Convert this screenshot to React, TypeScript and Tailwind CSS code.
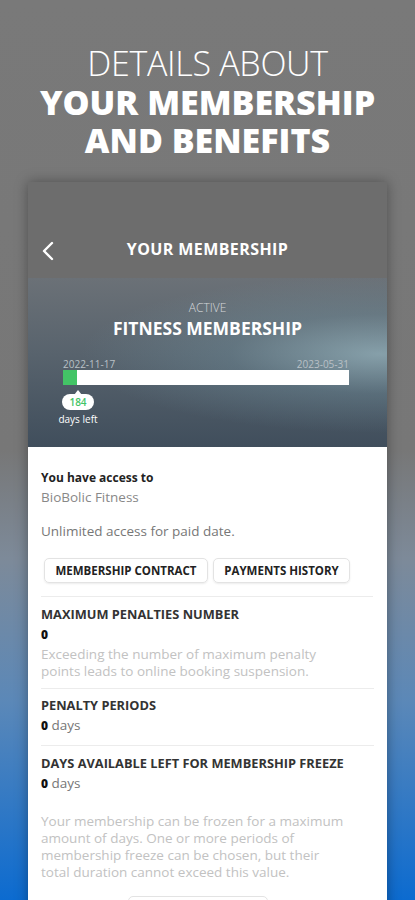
import React from "react";

const font = { fontFamily: "'Open Sans', 'Noto Sans', sans-serif" };

function Divider() {
  return <div className="h-px bg-[#ececec]" />;
}

export default function App() {
  return (
    <div
      style={font}
      className="relative w-[415px] h-[900px] overflow-hidden bg-[linear-gradient(180deg,#797979_0%,#777777_50%,#7d8a99_62%,#5b88b8_78%,#0c6bd0_100%)]"
    >
      {/* headline */}
      <div className="pt-[44px] text-center text-white leading-[39px] text-[34px]">
        <div className="font-light tracking-[-0.3px]">DETAILS ABOUT</div>
        <div className="font-extrabold">YOUR MEMBERSHIP</div>
        <div className="font-extrabold -mt-[1px]">AND BENEFITS</div>
      </div>

      {/* phone card */}
      <div className="absolute left-[28px] top-[182px] w-[359px] h-[740px] shadow-[0_0_12px_rgba(0,0,0,0.35)] bg-white">
        {/* header */}
        <div className="h-[96px] bg-[#6d6d6d] flex items-end pb-[17px] relative">
          <svg
            className="absolute left-[14px] top-[59px]"
            width="12"
            height="20"
            viewBox="0 0 12 20"
            fill="none"
          >
            <path d="M10 2 L2 10 L10 18" stroke="white" strokeWidth="2.4" strokeLinecap="round" strokeLinejoin="round" />
          </svg>
          <div className="w-full text-center text-white font-bold text-[16px] tracking-[0.4px]">
            YOUR MEMBERSHIP
          </div>
        </div>

        {/* hero */}
        <div className="h-[169px] relative overflow-hidden bg-[linear-gradient(180deg,#6b7177_0%,#58636d_45%,#404e5c_100%)]">
          <div className="absolute inset-0 bg-[radial-gradient(ellipse_at_98%_45%,rgba(165,200,210,0.6)_0%,rgba(120,160,175,0.28)_30%,rgba(0,0,0,0)_60%)]" />
          <div className="relative text-center pt-[23px]">
            <div className="text-[12px] font-light text-[#d5d8db] leading-[14px]">ACTIVE</div>
            <div className="text-[17.5px] font-bold text-white leading-[22px] mt-[2px]">FITNESS MEMBERSHIP</div>
          </div>
          <div className="relative ml-[35px] mr-[38px] mt-[19px]">
            <div className="flex justify-between text-[10px] text-[#b9c0c6] leading-[12px]">
              <span>2022-11-17</span>
              <span>2023-05-31</span>
            </div>
            <div className="h-[15px] bg-white flex">
              <div className="w-[14px] bg-[#43c466]" />
            </div>
            <div className="flex flex-col items-start mt-[9px] w-[46px] -ml-[8px]">
              <div className="relative self-center">
                <div className="absolute left-1/2 -top-[4px] -ml-[4px] w-0 h-0 border-l-[4px] border-r-[4px] border-b-[5px] border-l-transparent border-r-transparent border-b-white" />
                <div className="bg-white rounded-full px-[7px] h-[16px] text-[10px] leading-[16px] font-semibold text-[#43c466]">184</div>
              </div>
              <div className="self-center text-[10px] text-white leading-[14px] mt-[2px] whitespace-nowrap">days left</div>
            </div>
          </div>
        </div>

        {/* content */}
        <div className="px-[13px] pt-[22px] text-[13.5px]">
          <div className="font-bold text-[#222] leading-[17px] text-[12px]">You have access to</div>
          <div className="text-[#888] leading-[17px] mt-[3px]">BioBolic Fitness</div>
          <div className="text-[#777] leading-[17px] mt-[17px]">Unlimited access for paid date.</div>
          <div className="flex gap-[5px] mt-[18px] ml-[3px]">
            <div className="h-[25px] w-[164px] justify-center rounded-[5px] border border-[#e3e3e3] shadow-[0_1px_2px_rgba(0,0,0,0.08)] text-[11.5px] font-bold text-[#222] flex items-center">
              MEMBERSHIP CONTRACT
            </div>
            <div className="h-[25px] w-[137px] justify-center rounded-[5px] border border-[#e3e3e3] shadow-[0_1px_2px_rgba(0,0,0,0.08)] text-[11.5px] font-bold text-[#222] flex items-center">
              PAYMENTS HISTORY
            </div>
          </div>
          <div className="mt-[13px] mr-[1px]"><Divider /></div>

          <div className="pt-[9px] pb-[8px]">
            <div className="font-bold text-[#333] leading-[17px] text-[12.8px]">MAXIMUM PENALTIES NUMBER</div>
            <div className="font-extrabold text-[#111] leading-[17px] mt-[3px] text-[12px]">0</div>
            <div className="text-[#c2c2c2] leading-[17px] mt-[3px]">
              Exceeding the number of maximum penalty
              <br />
              points leads to online booking suspension.
            </div>
          </div>
          <Divider />

          <div className="pt-[8px] pb-[11px]">
            <div className="font-bold text-[#333] leading-[17px] text-[12.8px]">PENALTY PERIODS</div>
            <div className="leading-[17px] mt-[3px] text-[#777]">
              <span className="font-extrabold text-[#111] text-[12px]">0</span> days
            </div>
          </div>
          <Divider />

          <div className="pt-[9px]">
            <div className="font-bold text-[#333] leading-[17px] text-[12.8px]">DAYS AVAILABLE LEFT FOR MEMBERSHIP FREEZE</div>
            <div className="leading-[17px] mt-[3px] text-[#777]">
              <span className="font-extrabold text-[#111] text-[12px]">0</span> days
            </div>
            <div className="text-[#c2c2c2] leading-[17px] mt-[21px]">
              Your membership can be frozen for a maximum
              <br />
              amount of days. One or more periods of
              <br />
              membership freeze can be chosen, but their
              <br />
              total duration cannot exceed this value.
            </div>
            <div className="ml-[87px] mt-[15px] w-[140px] h-[26px] rounded-[5px] border border-[#e3e3e3]" />
          </div>
        </div>
      </div>
    </div>
  );
}
